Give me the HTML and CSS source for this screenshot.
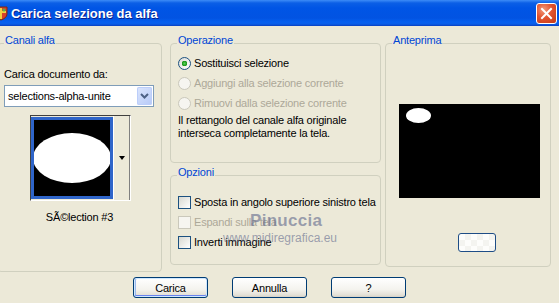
FILE: index.html
```html
<!DOCTYPE html>
<html lang="it">
<head>
  <meta charset="UTF-8">
  <title>Carica selezione da alfa</title>
  <link rel="stylesheet" href="styles.css">
</head>
<body>
  <!-- Title bar -->
  <div class="titlebar">
    <svg class="app-icon" width="16" height="16" viewBox="0 0 16 16">
      <path d="M2 2h12v7c0 3-3 5-6 6-3-1-6-3-6-6z" fill="#d8402a" stroke="#7a2a10" stroke-width="1"/>
      <path d="M8 3v11M3 7h10" stroke="#f4d040" stroke-width="2"/>
      <circle cx="11" cy="5" r="1.5" fill="#5ab04a"/>
    </svg>
    <span class="title">Carica selezione da alfa</span>
    <button class="close-btn" type="button">
      <svg width="13" height="13" viewBox="0 0 13 13">
        <path d="M2 2l9 9M11 2l-9 9" stroke="#fff" stroke-width="2" stroke-linecap="square"/>
      </svg>
    </button>
  </div>

  <div class="content">
    <!-- Canali alfa -->
    <fieldset class="group group-channels">
      <legend>Canali alfa</legend>
      <div class="field-label">Carica documento da:</div>
      <div class="combo">
        <span class="combo-text">selections-alpha-unite</span>
        <span class="combo-arrow">
          <svg width="9" height="6" viewBox="0 0 9 6">
            <path d="M1 1l3.5 3.5L8 1" fill="none" stroke="#4d6185" stroke-width="2"/>
          </svg>
        </span>
      </div>
      <div class="thumb">
        <div class="thumb-sel">
          <div class="thumb-canvas">
            <div class="thumb-oval"></div>
          </div>
        </div>
        <div class="thumb-btn"><span class="tri"></span></div>
      </div>
      <div class="thumb-caption">SÃ©lection #3</div>
    </fieldset>

    <div class="middle">
      <!-- Operazione -->
      <fieldset class="group group-op">
        <legend>Operazione</legend>
        <label class="opt-row first">
          <span class="radio checked"></span>
          <span>Sostituisci selezione</span>
        </label>
        <label class="opt-row disabled">
          <span class="radio"></span>
          <span>Aggiungi alla selezione corrente</span>
        </label>
        <label class="opt-row disabled">
          <span class="radio"></span>
          <span>Rimuovi dalla selezione corrente</span>
        </label>
        <p class="op-note">Il rettangolo del canale alfa originale<br>interseca completamente la tela.</p>
      </fieldset>

      <!-- Opzioni -->
      <fieldset class="group group-opts">
        <legend>Opzioni</legend>
        <label class="opt-row first">
          <span class="check"></span>
          <span>Sposta in angolo superiore sinistro tela</span>
        </label>
        <label class="opt-row disabled">
          <span class="check"></span>
          <span>Espandi sulla tela</span>
        </label>
        <label class="opt-row">
          <span class="check"></span>
          <span>Inverti immagine</span>
        </label>
      </fieldset>
    </div>

    <!-- Anteprima -->
    <fieldset class="group group-preview">
      <legend>Anteprima</legend>
      <div class="preview">
        <div class="preview-oval"></div>
      </div>
      <button class="mini-btn" type="button"></button>
    </fieldset>
  </div>

  <div class="actions">
    <button class="btn default" type="button">Carica</button>
    <button class="btn" type="button">Annulla</button>
    <button class="btn" type="button">?</button>
  </div>

  <!-- watermark over the dialog -->
  <div class="watermark">
    <div class="wm-name">Pinuccia</div>
    <div class="wm-url">www.midiregrafica.eu</div>
  </div>
</body>
</html>
```

FILE: styles.css
```css
/* Page / dialog */
body {
  margin: 0;
  width: 559px;
  height: 303px;
  overflow: hidden;
  position: relative;
  background: #ece9d8;
  font-family: "Liberation Sans", Arial, sans-serif;
  font-size: 11px;
  letter-spacing: -0.2px;
  color: #000;
}

/* Title bar */
.titlebar {
  display: flex;
  align-items: center;
  height: 26px;
  padding-right: 2px;
  background: linear-gradient(#3d8cf7 0, #0b5fe6 3px, #0055e5 8px, #0253e2 18px, #0660f0 22px, #0a5ee8 24px, #0a3fc0 26px);
}
.app-icon {
  margin-left: -7px;
  flex-shrink: 0;
}
.title {
  margin-left: 2px;
  color: #fff;
  font-size: 13px;
  font-weight: bold;
  letter-spacing: 0;
  text-shadow: 1px 1px #0a1f8a;
}
.close-btn {
  margin-left: auto;
  width: 21px;
  height: 21px;
  padding: 0;
  display: flex;
  align-items: center;
  justify-content: center;
  border: 1px solid #fff;
  border-radius: 3px;
  background: radial-gradient(circle at 35% 30%, #f29a7c 0, #e2532f 45%, #c33a16 100%);
}

/* Columns */
.content {
  display: flex;
  padding-top: 8px;
}
.group {
  margin: 0;
  padding: 0;
  min-width: 0;
  box-sizing: border-box;
  border: 1px solid #d0d0bf;
  border-radius: 4px;
}
.group legend {
  margin-left: 6px;
  padding: 0 1px 6px;
  line-height: 12px;
  color: #0046d5;
}
.group-channels {
  width: 165px;
  height: 238px;
  margin-left: -3px;
}
.middle {
  width: 211px;
  margin-left: 8px;
  display: flex;
  flex-direction: column;
}
.group-op {
  height: 129px;
}
.group-opts {
  height: 99px;
  margin-top: 3px;
}
.group-preview {
  width: 166px;
  height: 233px;
  margin-left: 4px;
}

/* Canali alfa */
.field-label {
  margin: 16px 0 0 6px;
  line-height: 13px;
}
.combo {
  display: flex;
  width: 150px;
  height: 22px;
  margin: 4px 0 0 6px;
  box-sizing: border-box;
  border: 1px solid #7f9db9;
  background: #fff;
}
.combo-text {
  flex: 1;
  padding-left: 3px;
  line-height: 20px;
}
.combo-arrow {
  width: 15px;
  margin: 1px;
  display: flex;
  align-items: center;
  justify-content: center;
  border-radius: 2px;
  background: linear-gradient(135deg, #dce6fd, #b6c9f7);
  box-shadow: inset 0 0 0 1px #bccefa;
}
.thumb {
  display: flex;
  width: 101px;
  height: 86px;
  margin: 8px 0 0 32px;
  box-sizing: border-box;
  border: 1px solid;
  border-color: #404040 #fff #fff #404040;
}
.thumb-sel {
  width: 82px;
  padding: 1px 0;
  box-sizing: border-box;
}
.thumb-canvas {
  height: 100%;
  box-sizing: border-box;
  border: 3px solid #2f65c9;
  background: #000;
  overflow: hidden;
  display: flex;
  align-items: center;
  justify-content: center;
}
.thumb-oval {
  flex-shrink: 0;
  width: 78px;
  height: 50px;
  border-radius: 50%;
  background: #fff;
}
.thumb-btn {
  flex: 1;
  display: flex;
  align-items: center;
  justify-content: center;
  border-left: 1px solid #fff;
  border-right: 1px solid #808080;
  background: #ece9d8;
}
.tri {
  border-left: 3.5px solid transparent;
  border-right: 3.5px solid transparent;
  border-top: 4px solid #000;
}
.thumb-caption {
  margin-top: 10px;
  line-height: 13px;
  text-align: center;
}

/* Radio / check rows */
.opt-row {
  display: flex;
  align-items: center;
  gap: 3px;
  height: 20px;
  padding-left: 7px;
}
.group-op .opt-row.first {
  margin-top: 1px;
}
.group-opts .opt-row.first {
  margin-top: 8px;
}
.opt-row.disabled {
  color: #aca899;
}
.radio {
  width: 13px;
  height: 13px;
  box-sizing: border-box;
  border: 1px solid #1c5180;
  border-radius: 50%;
  background: linear-gradient(135deg, #dcdcd7, #fff);
}
.radio.checked {
  background: radial-gradient(circle, #5ad25a 0, #21a121 2px, #1f901f 2.6px, transparent 3px), linear-gradient(135deg, #dcdcd7, #fff);
}
.check {
  width: 13px;
  height: 13px;
  box-sizing: border-box;
  border: 1px solid #1c5180;
  background: linear-gradient(135deg, #d8d8d0, #fff);
}
.disabled .radio,
.disabled .check {
  border-color: #cac8bb;
  background: #f6f5f0;
}
.op-note {
  margin: 1px 0 0 7px;
  line-height: 13px;
}

/* Anteprima */
.preview {
  width: 141px;
  height: 94px;
  margin: 52px 0 0 13px;
  padding: 4px 7px;
  box-sizing: border-box;
  background: #000;
}
.preview-oval {
  width: 25px;
  height: 15px;
  border-radius: 50%;
  background: #fff;
}
.mini-btn {
  display: block;
  width: 38px;
  height: 19px;
  margin: 35px 0 0 72px;
  border: 1px solid #1e4d86;
  border-radius: 3px;
  background:
    repeating-conic-gradient(#f4f4f0 0 25%, #fdfdfb 0 50%) 0 0 / 12px 12px;
}

/* Bottom buttons */
.actions {
  display: flex;
  gap: 24px;
  margin-top: 5px;
  padding-left: 133px;
}
.btn {
  width: 75px;
  height: 21px;
  padding: 0;
  border: 1px solid #003c74;
  border-radius: 3px;
  background: linear-gradient(#fff 0, #f4f3ee 60%, #e3e0d6 90%, #d6d0c5 100%);
  font-family: inherit;
  font-size: 11px;
  letter-spacing: -0.2px;
  color: #000;
}
.btn.default {
  box-shadow: inset 0 0 0 1px #cee7ff, inset 0 -1px 0 1px #6982ee, inset 1px 0 0 1px #9db9eb;
}

/* Watermark */
.watermark {
  position: absolute;
  left: 223px;
  top: 211px;
  color: rgba(96, 104, 140, 0.6);
  pointer-events: none;
}
.wm-name {
  margin-left: 27px;
  font-size: 17px;
  font-weight: bold;
  letter-spacing: 0.3px;
  line-height: 20px;
}
.wm-url {
  font-size: 12px;
  letter-spacing: 0;
  line-height: 14px;
}
```
